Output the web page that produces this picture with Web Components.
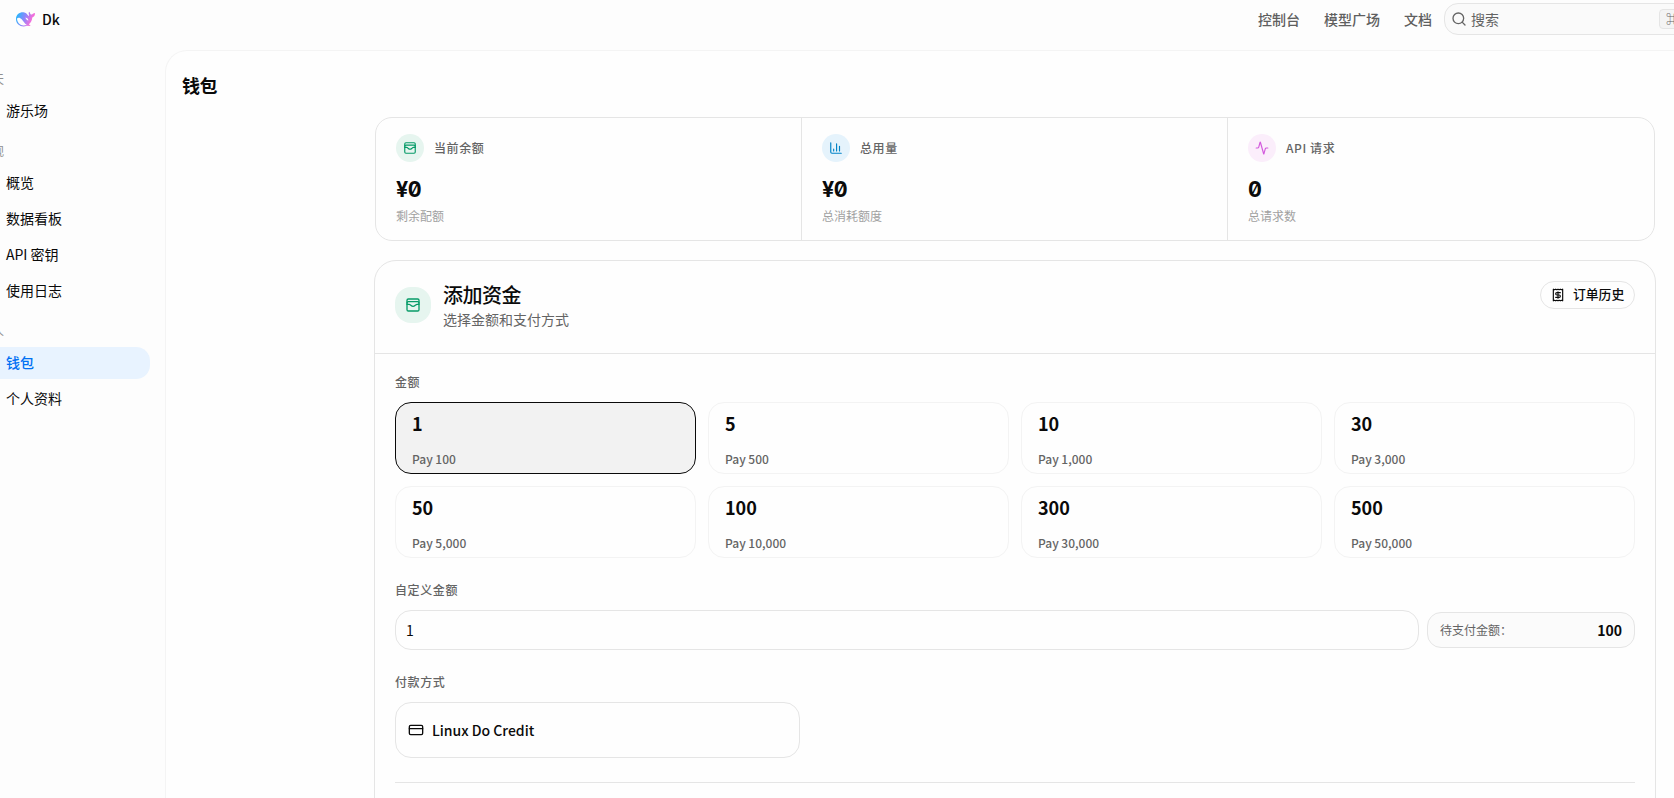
<!DOCTYPE html>
<html lang="zh-CN">
<head>
<meta charset="utf-8">
<title>Dk</title>
<style>
    html, body {
        margin: 0;
        height: 100%;
        overflow: hidden;
    }
    body {
        font-family: "Noto Sans CJK SC", sans-serif;
        font-size: 14px;
        line-height: 20px;
        color: #0a0a0a;
        background: #fdfdfd;
        --line: #e5e5e5;
        --muted: #646464;
    }
</style>
</head>
<body>
<app-shell>
    <app-header slot="header" name="Dk"></app-header>
    <side-nav slot="nav">
        <nav-group label="聊天"><nav-item>游乐场</nav-item></nav-group>
        <nav-group label="概观">
            <nav-item>概览</nav-item>
            <nav-item>数据看板</nav-item>
            <nav-item>API 密钥</nav-item>
            <nav-item>使用日志</nav-item>
        </nav-group>
        <nav-group label="个人">
            <nav-item active>钱包</nav-item>
            <nav-item>个人资料</nav-item>
        </nav-group>
    </side-nav>
    <wallet-page title="钱包">
        <stat-group>
            <stat-card icon="wallet" tone="green" label="当前余额" value="¥0" note="剩余配额"></stat-card>
            <stat-card icon="chart" tone="blue" label="总用量" value="¥0" note="总消耗额度"></stat-card>
            <stat-card icon="pulse" tone="pink" label="API 请求" value="0" note="总请求数"></stat-card>
        </stat-group>
        <fund-panel></fund-panel>
    </wallet-page>
</app-shell>

<script>
const ICONS = {
    wallet: '<rect x="3" y="3" width="18" height="18" rx="2"/><path d="M3 9a2 2 0 0 1 2-2h14a2 2 0 0 1 2 2M3 11h3c.8 0 1.600.3 2.100.9l1.100.9c1.600 1.600 4.100 1.600 5.700 0l1.100-.9c.5-.5 1.300-.9 2.100-.9H21"/>',
    chart: '<path d="M3 3v16a2 2 0 0 0 2 2h16M18 17V9M13 17V5M8 17v-3"/>',
    pulse: '<path d="M22 12h-2.480a2 2 0 0 0-1.930 1.460l-2.350 8.360a.25.25 0 0 1-.48 0L9.240 2.180a.25.25 0 0 0-.48 0l-2.350 8.360A2 2 0 0 1 4.490 12H2"/>',
    search: '<circle cx="11" cy="11" r="8"/><path d="m21 21-4.300-4.300"/>',
    receipt: '<path d="M4 2v20l2-1 2 1 2-1 2 1 2-1 2 1 2-1 2 1V2l-2 1-2-1-2 1-2-1-2 1-2-1-2 1Z"/><path d="M16 8h-6a2 2 0 1 0 0 4h4a2 2 0 1 1 0 4H8M12 17.500v-11"/>',
    card: '<rect x="2" y="5" width="20" height="14" rx="2"/><path d="M2 10h20"/>'
};

class UiIcon extends HTMLElement {
    connectedCallback() {
        const name = this.getAttribute('name');
        const size = this.getAttribute('size') || 16;
        this.attachShadow({ mode: 'open' });
        this.shadowRoot.innerHTML = `
            <style>
                :host { display: block; flex: none; }
                svg { display: block; }
            </style>
            <svg width="${size}" height="${size}" viewBox="0 0 24 24" fill="none" stroke="currentColor"
                stroke-width="2" stroke-linecap="round" stroke-linejoin="round">${ICONS[name]}</svg>
        `;
    }
}

class AppShell extends HTMLElement {
    connectedCallback() {
        this.attachShadow({ mode: 'open' });
        this.shadowRoot.innerHTML = `
            <style>
                :host {
                    display: grid;
                    grid-template: 50px minmax(0, 1fr) / 165px minmax(0, 1fr);
                    height: 100vh;
                }
                slot[name="header"] { display: block; grid-column: 1 / 3; }
                main {
                    border: solid #f4f4f4;
                    border-width: 1px 0 0 1px;
                    border-radius: 22px 0 0 0;
                    background: #fefefe;
                    overflow: hidden;
                }
            </style>
            <slot name="header"></slot>
            <slot name="nav"></slot>
            <main><slot></slot></main>
        `;
    }
}

class AppHeader extends HTMLElement {
    connectedCallback() {
        this.attachShadow({ mode: 'open' });
        this.shadowRoot.innerHTML = `
            <style>
                :host { display: flex; height: 38px; align-items: center; font-weight: 500; }
                .logo { display: block; margin: 0 6px 0 15px; }
                .name { flex: 1; line-height: 18px; padding-bottom: 1px; }
                nav { display: flex; gap: 24px; color: #5f5f5f; margin-right: 12px; line-height: 18px; padding-bottom: 1px; }
                .search {
                    box-sizing: border-box;
                    display: flex;
                    align-items: center;
                    flex: none;
                    width: 256px;
                    height: 32px;
                    margin-right: -26px;
                    padding: 0 8px 0 6px;
                    border: 1px solid var(--line);
                    border-radius: 14px;
                    background: #fafafa;
                    color: var(--muted);
                    font-weight: 400;
                }
                .search span { flex: 1; margin-left: 4px; line-height: 18px; }
                kbd {
                    box-sizing: border-box;
                    width: 32px;
                    height: 20px;
                    border: 1px solid var(--line);
                    border-radius: 4px;
                    background: #f4f4f4;
                    padding-left: 6px;
                    font: 12px/18px "Noto Sans CJK SC", sans-serif;
                    white-space: nowrap;
                }
            </style>
            <svg class="logo" width="21" height="17" viewBox="0 0 21 17">
                <defs>
                    <linearGradient id="g" x1="0" x2="1" y1="0.3" y2="0.6">
                        <stop offset="0" stop-color="#23b9fb"/>
                        <stop offset=".45" stop-color="#8f86fb"/>
                        <stop offset=".8" stop-color="#f070dc"/>
                        <stop offset="1" stop-color="#ff5fc8"/>
                    </linearGradient>
                </defs>
                <path fill="url(#g)" d="M1 8C1 3.500 4.500.9 8.600 1.200c2.500.3 2.800 1.500 4.600 3.400 1 .8 1.100-.2.500-1.600-.2-.9 0-1.700.500-2.200.8.500.8 1.700 1.600 2.700 1.200.4 2.500-1.600 4.200-1.600.100 2.300-.9 3.900-2.700 4.500-.3 3.100-1.600 5.300-3.400 6.800l1.800 1.800-4-.3C7.400 16.700 1 14.300 1 8Z"/>
                <path fill="#fdfdfd" d="M2 7.600c1.300-1.300 3.100-.8 4.900.9 1.800 1.700 2.400 4.200 4.900 5.300-4.900 2.200-9.600-1-9.800-6.200ZM10.500 6.500c1.800.4 2.800 1.500 2.900 3-1.500-.2-2.500-1.300-2.900-3Z"/>
            </svg>
            <span class="name">${this.getAttribute('name')}</span>
            <nav><span>控制台</span><span>模型广场</span><span>文档</span></nav>
            <div class="search"><ui-icon name="search"></ui-icon><span>搜索</span><kbd>⌘K</kbd></div>
        `;
    }
}

class SideNav extends HTMLElement {
    connectedCallback() {
        this.attachShadow({ mode: 'open' });
        this.shadowRoot.innerHTML = `
            <style>
                :host { display: block; padding: 13px 15px 0 0; }
            </style>
            <slot></slot>
        `;
    }
}

class NavGroup extends HTMLElement {
    connectedCallback() {
        this.attachShadow({ mode: 'open' });
        this.shadowRoot.innerHTML = `
            <style>
                :host { display: block; margin-bottom: 8px; }
                .label {
                    height: 32px;
                    font-size: 12px;
                    line-height: 32px;
                    color: #8f8f8f;
                    margin-left: -20px;
                }
                .items { display: grid; gap: 4px; }
            </style>
            <div class="label">${this.getAttribute('label')}</div>
            <div class="items"><slot></slot></div>
        `;
    }
}

class NavItem extends HTMLElement {
    connectedCallback() {
        this.attachShadow({ mode: 'open' });
        this.shadowRoot.innerHTML = `
            <style>
                :host {
                    display: block;
                    height: 32px;
                    line-height: 30px;
                    padding-left: 6px;
                    border-radius: 0 14px 14px 0;
                }
                :host([active]) { background: #e8f3ff; color: #0070f3; font-weight: 500; }
            </style>
            <slot></slot>
        `;
    }
}

class WalletPage extends HTMLElement {
    connectedCallback() {
        this.attachShadow({ mode: 'open' });
        this.shadowRoot.innerHTML = `
            <style>
                :host { display: block; }
                h1 { margin: 20px 0 0 16px; font-size: 18px; line-height: 28px; font-weight: 700; letter-spacing: -.4px; }
                .body { display: grid; gap: 19px; margin: 18px 18px 0 208px; }
            </style>
            <h1>${this.getAttribute('title')}</h1>
            <div class="body"><slot></slot></div>
        `;
    }
}

class StatGroup extends HTMLElement {
    connectedCallback() {
        this.attachShadow({ mode: 'open' });
        this.shadowRoot.innerHTML = `
            <style>
                :host {
                    box-sizing: border-box;
                    display: grid;
                    grid-template-columns: repeat(3, 1fr);
                    height: 124px;
                    margin: 0 1px;
                    border: 1px solid var(--line);
                    border-radius: 17px;
                }
                ::slotted(:not(:last-child)) { border-right: 1px solid var(--line); }
            </style>
            <slot></slot>
        `;
    }
}

class StatCard extends HTMLElement {
    connectedCallback() {
        const label = this.getAttribute('label');
        const value = this.getAttribute('value');
        const note = this.getAttribute('note');
        this.attachShadow({ mode: 'open' });
        this.shadowRoot.innerHTML = `
            <style>
                :host { display: block; padding: 16px 20px 0; }
                .top { display: flex; align-items: center; gap: 10px; }
                .badge {
                    display: grid;
                    place-items: center;
                    width: 28px;
                    height: 28px;
                    border-radius: 14px;
                    background: #e6f5ef;
                    color: #079b68;
                }
                :host([tone="blue"]) .badge { background: #e5f3fc; color: #0284c7; }
                :host([tone="pink"]) .badge { background: #fbeefb; color: #d35bdd; }
                .label { font-size: 12px; font-weight: 500; letter-spacing: .6px; color: var(--muted); }
                .value {
                    margin-top: 13px;
                    font: 700 21.5px/28px Inter, "Noto Sans CJK SC", sans-serif;
                    font-feature-settings: "zero", "tnum";
                    letter-spacing: -.6px;
                }
                .note { margin-top: 4px; font-size: 12px; line-height: 18px; color: #a1a1a1; }
            </style>
            <div class="top">
                <div class="badge"><ui-icon name="${this.getAttribute('icon')}" size="14"></ui-icon></div>
                <span class="label">${label}</span>
            </div>
            <div class="value">${value}</div>
            <div class="note">${note}</div>
        `;
    }
}

class AmountOption extends HTMLElement {
    connectedCallback() {
        this.attachShadow({ mode: 'open' });
        this.shadowRoot.innerHTML = `
            <style>
                :host {
                    box-sizing: border-box;
                    display: block;
                    height: 72px;
                    padding: 6px 16px 0;
                    border: 1px solid #f3f3f3;
                    border-radius: 16px;
                }
                :host([selected]) { border-color: #0a0a0a; background: #f2f2f2; }
                .amount { font-size: 18px; line-height: 28px; font-weight: 700; }
                .pay { margin-top: 14px; font-size: 12px; line-height: 16px; font-weight: 500; color: var(--muted); }
            </style>
            <div class="amount">${this.getAttribute('amount')}</div>
            <div class="pay">Pay ${this.getAttribute('pay')}</div>
        `;
    }
}

class FundPanel extends HTMLElement {
    connectedCallback() {
        const amounts = [1, 5, 10, 30, 50, 100, 300, 500];
        const options = amounts.map((n, i) =>
            `<amount-option amount="${n}" pay="${(n * 100).toLocaleString('en-US')}" ${i === 0 ? 'selected' : ''}></amount-option>`
        ).join('');
        this.attachShadow({ mode: 'open' });
        this.shadowRoot.innerHTML = `
            <style>
                :host {
                    display: block;
                    height: 700px;
                    border: 1px solid var(--line);
                    border-radius: 22px;
                }
                header {
                    box-sizing: border-box;
                    display: flex;
                    height: 93px;
                    padding: 20px 20px 0;
                    border-bottom: 1px solid var(--line);
                }
                .badge {
                    display: grid;
                    place-items: center;
                    width: 36px;
                    height: 36px;
                    margin: 6px 12px 0 0;
                    border-radius: 16px;
                    background: #e6f5ef;
                    color: #079b68;
                }
                .heading { flex: 1; }
                h2 { margin: 0; font-size: 20px; line-height: 28px; font-weight: 500; letter-spacing: -.5px; }
                .heading p { margin: 0; color: var(--muted); }
                .history {
                    box-sizing: border-box;
                    display: flex;
                    align-items: center;
                    gap: 8px;
                    width: 95px;
                    height: 28px;
                    padding-left: 10px;
                    border: 1px solid var(--line);
                    border-radius: 14px;
                    font-size: 12.8px;
                    font-weight: 500;
                    white-space: nowrap;
                }
                .history span { line-height: 18px; padding-bottom: 2px; }
                .content { padding: 20px 20px 0; }
                .label {
                    font-size: 12px;
                    line-height: 16px;
                    font-weight: 500;
                    letter-spacing: .6px;
                    color: var(--muted);
                }
                .options { display: grid; grid-template-columns: repeat(4, 1fr); gap: 12px; margin: 12px 0 24px; }
                .custom { display: flex; align-items: center; gap: 8px; margin: 12px 0 24px; }
                .input {
                    box-sizing: border-box;
                    flex: 1;
                    height: 40px;
                    padding: 0 10px;
                    border: 1px solid var(--line);
                    border-radius: 16px;
                    line-height: 39px;
                }
                .total {
                    box-sizing: border-box;
                    display: flex;
                    align-items: center;
                    justify-content: space-between;
                    width: 208px;
                    height: 36px;
                    padding: 0 12px;
                    border: 1px solid var(--line);
                    border-radius: 14px;
                    background: #fbfbfb;
                    font-size: 12px;
                    color: var(--muted);
                }
                .total b { font-size: 14px; color: #0a0a0a; }
                .method {
                    box-sizing: border-box;
                    display: flex;
                    align-items: center;
                    gap: 8px;
                    width: 405px;
                    height: 56px;
                    margin: 12px 0 24px;
                    padding: 0 12px;
                    border: 1px solid var(--line);
                    border-radius: 16px;
                    font-weight: 500;
                }
                .rule { border-top: 1px solid var(--line); }
            </style>
            <header>
                <div class="badge"><ui-icon name="wallet"></ui-icon></div>
                <div class="heading"><h2>添加资金</h2><p>选择金额和支付方式</p></div>
                <div class="history"><ui-icon name="receipt" size="14"></ui-icon><span>订单历史</span></div>
            </header>
            <div class="content">
                <div class="label">金额</div>
                <div class="options">${options}</div>
                <div class="label">自定义金额</div>
                <div class="custom">
                    <div class="input">1</div>
                    <div class="total"><span>待支付金额：</span><b>100</b></div>
                </div>
                <div class="label">付款方式</div>
                <div class="method"><ui-icon name="card"></ui-icon><span>Linux Do Credit</span></div>
                <div class="rule"></div>
            </div>
        `;
    }
}

customElements.define('ui-icon', UiIcon);
customElements.define('app-shell', AppShell);
customElements.define('app-header', AppHeader);
customElements.define('side-nav', SideNav);
customElements.define('nav-group', NavGroup);
customElements.define('nav-item', NavItem);
customElements.define('wallet-page', WalletPage);
customElements.define('stat-group', StatGroup);
customElements.define('stat-card', StatCard);
customElements.define('amount-option', AmountOption);
customElements.define('fund-panel', FundPanel);
</script>
</body>
</html>
